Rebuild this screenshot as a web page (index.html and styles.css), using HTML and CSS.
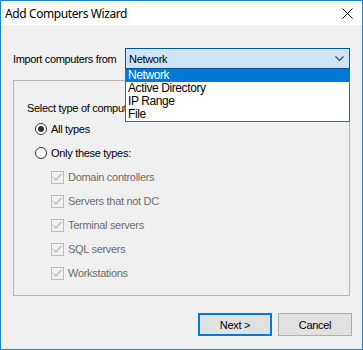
FILE: index.html
```html
<!DOCTYPE html>
<html lang="en">

<head>
	<meta charset="UTF-8">
	<title>Add Computers Wizard</title>
	<link rel="stylesheet" href="styles.css">
</head>

<body>
	<div class="window">
		<div class="titlebar">
			<span class="title">Add Computers Wizard</span>
			<svg class="close" width="11" height="11" viewBox="0 0 11 11">
				<path d="M0.5 0.5 L10.5 10.5 M10.5 0.5 L0.5 10.5" stroke="#000" stroke-width="1" />
			</svg>
		</div>

		<div class="content">
			<div class="source-row">
				<span class="label">Import computers from</span>
				<div class="combo">
					<div class="combo-box">
						<span>Network</span>
						<svg class="chevron" width="9" height="6" viewBox="0 0 9 6">
							<path d="M0.5 0.5 L4.5 4.5 L8.5 0.5" fill="none" stroke="#444" stroke-width="1.2" />
						</svg>
					</div>
					<ul class="combo-list">
						<li class="selected">Network</li>
						<li>Active Directory</li>
						<li>IP Range</li>
						<li>File</li>
					</ul>
				</div>
			</div>

			<div class="group">
				<div class="group-heading">Select type of computers</div>
				<div class="option radio">
					<span class="radio-dot checked"></span>All types
				</div>
				<div class="option radio">
					<span class="radio-dot"></span>Only these types:
				</div>
				<div class="option check disabled"><span class="check-box"><svg width="11" height="11" viewBox="0 0 11 11"><path d="M1.5 5.5 L4 8 L9.5 2" fill="none" stroke="#bcbcbc" stroke-width="1.4" /></svg></span>Domain controllers</div>
				<div class="option check disabled"><span class="check-box"><svg width="11" height="11" viewBox="0 0 11 11"><path d="M1.5 5.5 L4 8 L9.5 2" fill="none" stroke="#bcbcbc" stroke-width="1.4" /></svg></span>Servers that not DC</div>
				<div class="option check disabled"><span class="check-box"><svg width="11" height="11" viewBox="0 0 11 11"><path d="M1.5 5.5 L4 8 L9.5 2" fill="none" stroke="#bcbcbc" stroke-width="1.4" /></svg></span>Terminal servers</div>
				<div class="option check disabled"><span class="check-box"><svg width="11" height="11" viewBox="0 0 11 11"><path d="M1.5 5.5 L4 8 L9.5 2" fill="none" stroke="#bcbcbc" stroke-width="1.4" /></svg></span>SQL servers</div>
				<div class="option check disabled"><span class="check-box"><svg width="11" height="11" viewBox="0 0 11 11"><path d="M1.5 5.5 L4 8 L9.5 2" fill="none" stroke="#bcbcbc" stroke-width="1.4" /></svg></span>Workstations</div>
			</div>

			<div class="buttons">
				<button class="btn default">Next &gt;</button>
				<button class="btn">Cancel</button>
			</div>
		</div>
	</div>
</body>

</html>
```

FILE: styles.css
```css
html {
	height: 100%;
}

body {
	margin: 0;
	padding: 0;
	background: #f0f0f0;
	font-family: "Liberation Sans", Arial, sans-serif;
	font-size: 11px;
	letter-spacing: -0.3px;
	color: #000;
}

.window {
	width: 363px;
	height: 350px;
	box-sizing: border-box;
	border: 1px solid #1883d7;
	display: flex;
	flex-direction: column;
	background: #f0f0f0;
}

.titlebar {
	height: 24px;
	background: #fff;
	display: flex;
	align-items: center;
	justify-content: space-between;
	padding: 0 9px 0 4px;
}

.title {
	font-family: "Noto Sans", sans-serif;
	font-size: 12px;
	letter-spacing: -0.4px;
}

.close {
	display: block;
}

.content {
	flex: 1;
	display: flex;
	flex-direction: column;
	padding: 23px 12px 0 12px;
}

.source-row {
	display: flex;
	align-items: center;
}

.label {
	width: 112px;
	letter-spacing: -0.35px;
}

.combo {
	position: relative;
	width: 225px;
}

.combo-box {
	height: 21px;
	box-sizing: border-box;
	border: 1px solid #005499;
	background: #cce4f7;
	display: flex;
	align-items: center;
	justify-content: space-between;
	padding: 0 5px 0 3px;
}

.chevron {
	display: block;
}

.combo-list {
	position: absolute;
	top: 100%;
	left: 0;
	right: 0;
	margin: 0;
	padding: 0;
	list-style: none;
	background: #fff;
	border: 1px solid #0078d7;
	border-top: 0;
	z-index: 2;
}

.combo-list li {
	height: 13px;
	line-height: 13px;
	padding-left: 2px;
	font-size: 12px;
	letter-spacing: -0.4px;
}

.combo-list li.selected {
	background: #0078d7;
	color: #fff;
}

.group {
	margin-top: 11px;
	height: 216px;
	box-sizing: border-box;
	border: 1px solid #b4b4b4;
	padding: 20px 0 0 13px;
}

.group-heading {
	line-height: 14px;
	margin-bottom: 2px;
}

.option {
	height: 24px;
	display: flex;
	align-items: center;
}

.radio {
	padding-left: 8px;
}

.radio-dot {
	width: 12px;
	height: 12px;
	box-sizing: border-box;
	border: 1px solid #333;
	border-radius: 50%;
	background: #fff;
	margin-right: 4px;
	display: flex;
	align-items: center;
	justify-content: center;
}

.radio-dot.checked::after {
	content: '';
	width: 6px;
	height: 6px;
	border-radius: 50%;
	background: #333;
}

.check {
	padding-left: 24px;
}

.check-box {
	width: 13px;
	height: 13px;
	box-sizing: border-box;
	border: 1px solid #bcbcbc;
	margin-right: 4px;
	display: flex;
	align-items: center;
	justify-content: center;
}

.check-box svg {
	display: block;
}

.disabled {
	color: #6d6d6d;
}

.buttons {
	display: flex;
	justify-content: flex-end;
	gap: 6px;
	margin-top: 17px;
	margin-right: -2px;
}

.btn {
	width: 74px;
	height: 23px;
	box-sizing: border-box;
	border: 1px solid #adadad;
	background: #e1e1e1;
	font-family: "Liberation Sans", Arial, sans-serif;
	font-size: 11px;
	letter-spacing: -0.3px;
	color: #000;
	padding: 0;
}

.btn.default {
	border: 2px solid #0078d7;
}
```
